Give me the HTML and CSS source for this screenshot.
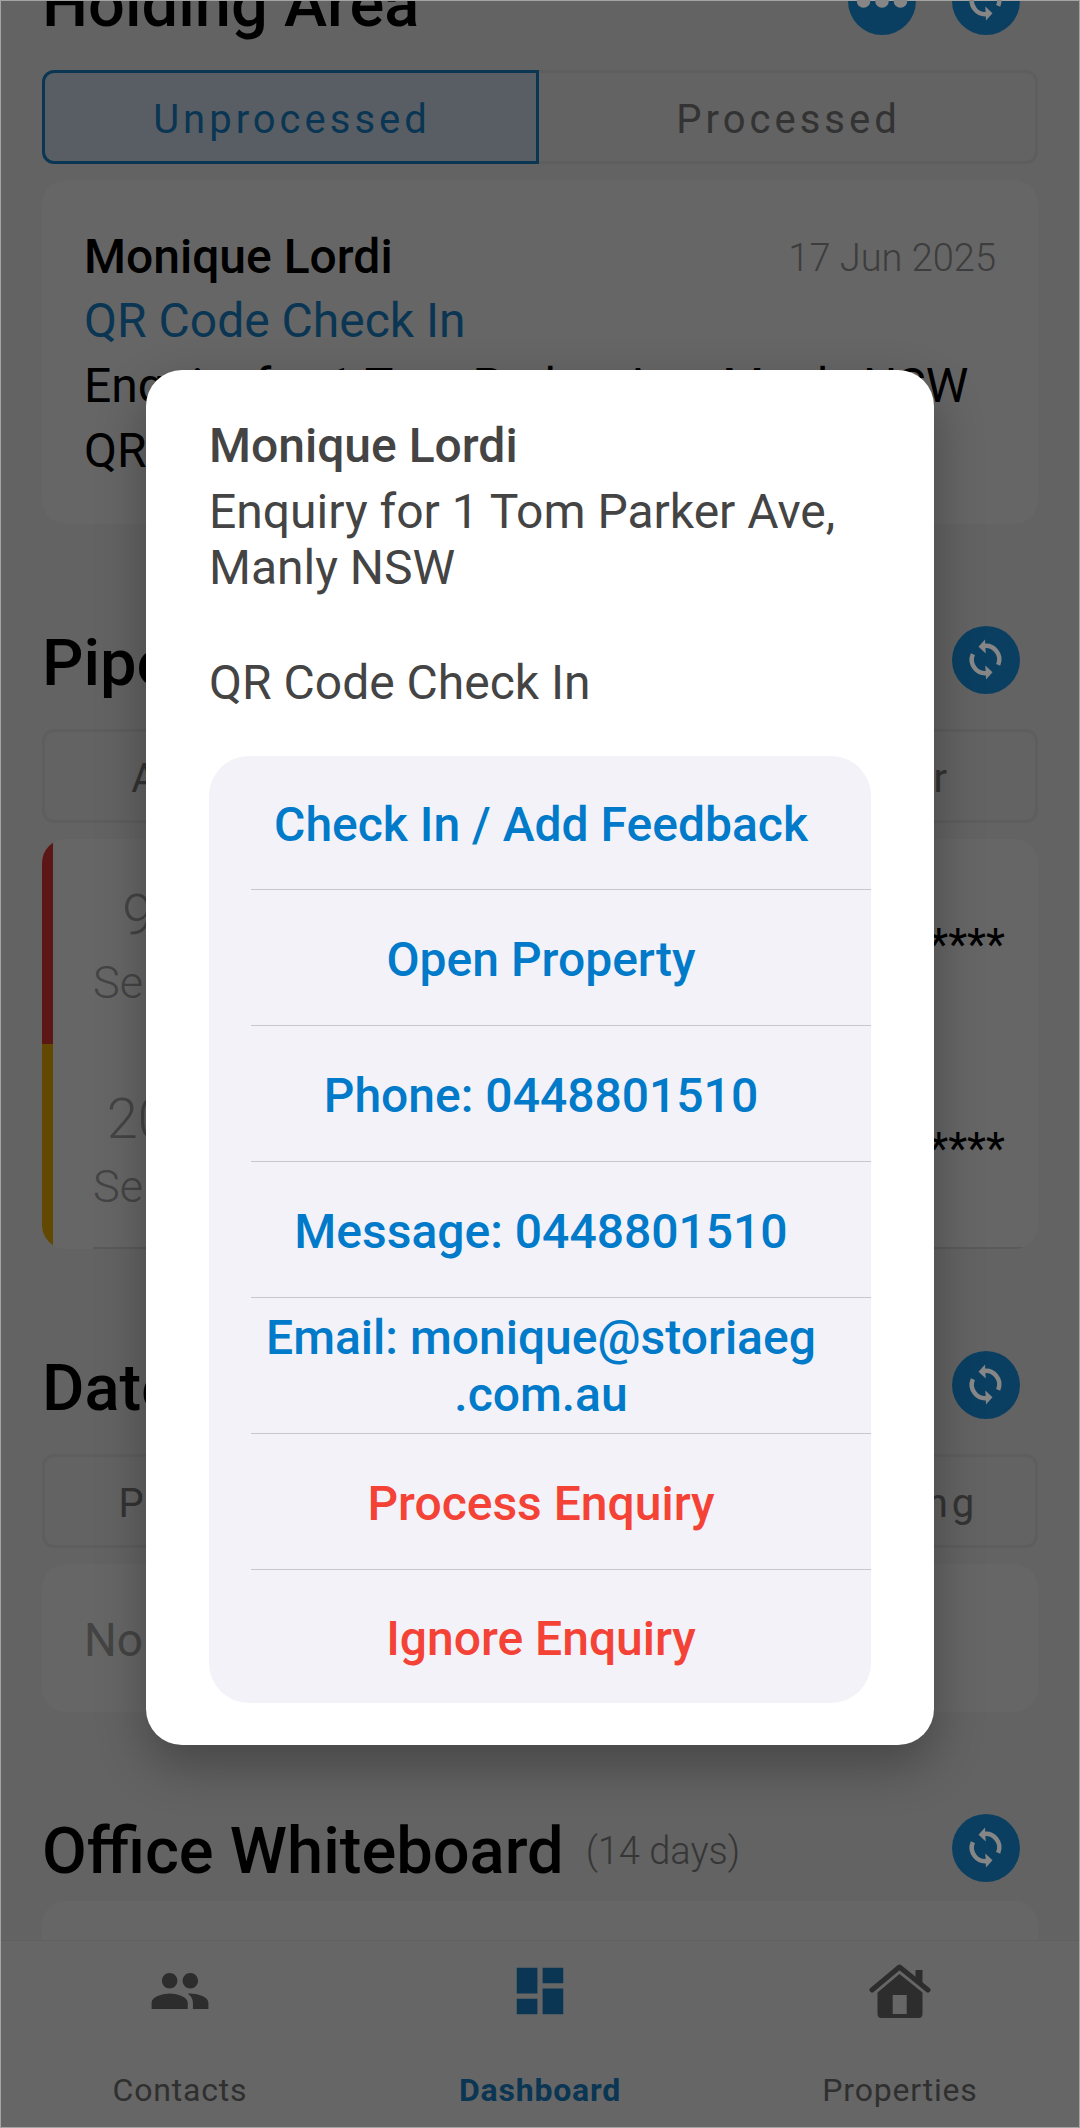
FILE: index.html
```html
<!DOCTYPE html>
<html lang="en">
<head>
<meta charset="utf-8">
<title>Dashboard</title>
<link rel="stylesheet" href="styles.css">
</head>
<body>
<svg class="sprite" aria-hidden="true">
  <symbol id="sync" viewBox="0 0 70 70">
    <path class="sync-arc" d="M47.5 40A14 14 0 0 0 32 20.7"/>
    <path class="sync-head" d="M27.3 21.3 34 14l.7 14.3z"/>
    <path class="sync-arc" d="M21.5 29A14 14 0 0 0 37 48.3"/>
    <path class="sync-head" d="M41.7 47.7 35 55l-.7-14.3z"/>
  </symbol>
</svg>
<div class="app">
  <main class="scroll">
    <div class="content">
      <section class="section">
        <header class="section-head">
          <h2 class="title">Holding Area</h2>
          <div class="head-actions">
            <button class="circle"><svg viewBox="0 0 70 70" class="circle-icon"><circle cx="16" cy="35" r="7"/><circle cx="35" cy="35" r="7"/><circle cx="54" cy="35" r="7"/></svg></button>
            <button class="circle"><svg class="circle-icon"><use href="#sync"/></svg></button>
          </div>
        </header>
        <div class="tabs">
          <div class="tab active">Unprocessed</div>
          <div class="tab">Processed</div>
        </div>
        <article class="card enquiry">
          <div class="enquiry-top"><span class="enquiry-name">Monique Lordi</span><span class="enquiry-date">17 Jun 2025</span></div>
          <div class="enquiry-source">QR Code Check In</div>
          <div class="enquiry-line">Enquiry for 1 Tom Parker Ave, Manly NSW</div>
          <div class="enquiry-line">QR Code Check In</div>
        </article>
      </section>

      <section class="section">
        <header class="section-head">
          <h2 class="title">Pipeline</h2>
          <div class="head-actions">
            <button class="circle"><svg class="circle-icon"><use href="#sync"/></svg></button>
          </div>
        </header>
        <div class="tabs">
          <div class="tab">Archive</div>
          <div class="tab">Current</div>
          <div class="tab">Partner</div>
        </div>
        <article class="card pipeline">
          <div class="pipe-row red">
            <div class="pipe-body">
              <div class="pipe-date"><span class="pipe-day">9</span><span class="pipe-month">Sept</span></div>
              <div class="pipe-mask">*****</div>
            </div>
          </div>
          <div class="pipe-row amber">
            <div class="pipe-body">
              <div class="pipe-date"><span class="pipe-day">20</span><span class="pipe-month">Sept</span></div>
              <div class="pipe-mask">*****</div>
            </div>
          </div>
        </article>
      </section>

      <section class="section">
        <header class="section-head">
          <h2 class="title">Dates</h2>
          <div class="head-actions">
            <button class="circle"><svg class="circle-icon"><use href="#sync"/></svg></button>
          </div>
        </header>
        <div class="tabs">
          <div class="tab">Previous</div>
          <div class="tab">Today</div>
          <div class="tab">Upcoming</div>
        </div>
        <article class="card empty">No dates</article>
      </section>

      <section class="section">
        <header class="section-head flush">
          <h2 class="title">Office Whiteboard <span class="title-note">(14 days)</span></h2>
          <div class="head-actions">
            <button class="circle"><svg class="circle-icon"><use href="#sync"/></svg></button>
          </div>
        </header>
        <article class="card board"></article>
      </section>
    </div>
  </main>
  <nav class="nav">
    <a class="nav-item"><svg viewBox="0 0 24 24" class="nav-icon"><path d="M16 11c1.66 0 2.99-1.34 2.99-3S17.66 5 16 5c-1.66 0-3 1.34-3 3s1.34 3 3 3zm-8 0c1.66 0 2.99-1.34 2.99-3S9.66 5 8 5C6.34 5 5 6.34 5 8s1.34 3 3 3zm0 2c-2.33 0-7 1.17-7 3.5V19h14v-2.5c0-2.33-4.67-3.5-7-3.5zm8 0c-.29 0-.62.02-.97.05 1.16.84 1.97 1.97 1.97 3.45V19h6v-2.5c0-2.33-4.67-3.5-7-3.5z"/></svg><span>Contacts</span></a>
    <a class="nav-item current"><svg viewBox="0 0 24 24" class="nav-icon"><path d="M3 13h8V3H3v10zm0 8h8v-6H3v6zm10 0h8V11h-8v10zm0-18v6h8V3h-8z"/></svg><span>Dashboard</span></a>
    <a class="nav-item"><svg viewBox="0 0 62 62" class="nav-icon"><path class="home-roof" d="M3 30 30.5 7 59 30"/><path d="M46.5 10h7v16l-7-6z"/><path fill-rule="evenodd" d="M30.5 14 8.5 32.5V54a4 4 0 0 0 4 4h37a4 4 0 0 0 4-4V32.5zM23.7 35h14v19h-14z"/></svg><span>Properties</span></a>
  </nav>
</div>

<div class="overlay">
  <div class="modal">
    <div class="modal-name">Monique Lordi</div>
    <div class="modal-text">Enquiry for 1 Tom Parker Ave, Manly NSW</div>
    <div class="modal-text modal-source">QR Code Check In</div>
    <div class="actions">
      <button class="action">Check In / Add Feedback</button>
      <button class="action">Open Property</button>
      <button class="action">Phone: 0448801510</button>
      <button class="action">Message: 0448801510</button>
      <button class="action wrap">Email: monique@storiaeg<wbr>.com.au</button>
      <button class="action danger">Process Enquiry</button>
      <button class="action danger">Ignore Enquiry</button>
    </div>
  </div>
</div>
</body>
</html>
```

FILE: styles.css
```css
* { box-sizing: border-box; }
html, body { margin: 0; padding: 0; height: 2128px; overflow: hidden; }
body { font-family: Roboto, "Noto Sans", sans-serif; background: #f7f7f7; color: #000; position: relative; }
.sprite { display: none; }

.app { display: flex; flex-direction: column; height: 2128px; }
.scroll { flex: 1; overflow: hidden; min-height: 0; }
.content { margin-top: -33px; padding: 0 42px; display: flex; flex-direction: column; }

.section { display: flex; flex-direction: column; margin-bottom: 102px; }
.section-head { display: flex; justify-content: space-between; align-items: center; height: 68px; margin-bottom: 35px; }
.section-head.flush { margin-bottom: 19px; }
.title { margin: 5px 0 0; display: flex; align-items: center; gap: 22px; font-size: 65px; font-weight: 500; line-height: 68px; white-space: nowrap; }
.title-note { font-size: 38px; font-weight: 300; color: #888; }
.head-actions { display: flex; gap: 36px; margin-right: 18px; }
.circle { width: 68px; height: 68px; border-radius: 50%; border: 0; padding: 0; background: #1a9ff5; display: flex; align-items: center; justify-content: center; }
.circle-icon { position: relative; z-index: 2; width: 68px; height: 68px; fill: #868686; }
.sync-arc { fill: none; stroke: #868686; stroke-width: 4.6; }
.sync-head { fill: #868686; }

.tabs { display: flex; height: 94px; border: 3px solid #ebebeb; border-radius: 12px; margin-bottom: 16px; }
.tab { flex: 1; display: flex; align-items: center; justify-content: center; padding: 4px 0 0 3px; font-size: 40px; letter-spacing: 4px; color: #808080; }
.tab.active { flex: 0 0 497px; color: #1a88d0; margin: -3px 0 -3px -3px; border: 3px solid #1a88d0; border-radius: 12px 0 0 12px; background: #dcebfa; }

.card { background: #fff; border-radius: 24px; }
.enquiry { height: 344px; padding: 45px 42px 0; font-size: 48px; line-height: 65px; }
.enquiry-top { height: 65px; display: flex; justify-content: space-between; align-items: center; }
.enquiry-name { font-weight: 500; margin-top: -3px; }
.enquiry-date { font-size: 38px; line-height: 44px; font-weight: 300; color: #999; }
.enquiry-source { color: #1a88d0; margin-top: -2px; }
.enquiry-line { white-space: nowrap; }

.pipeline { height: 410px; overflow: hidden; display: flex; flex-direction: column; }
.pipe-row { flex: 1; display: flex; border-left: 11px solid; }
.pipe-row.red { border-left-color: #e53935; }
.pipe-row.amber { border-left-color: #f5b400; }
.pipe-body { flex: 1; margin-left: 40px; padding: 12px 33px 0 0; display: flex; align-items: center; justify-content: space-between; }
.amber .pipe-body { border-bottom: 2px solid #e0e0e0; }
.pipe-date { display: flex; flex-direction: column; align-items: center; font-weight: 300; color: #aaa; }
.pipe-day { font-size: 56px; line-height: 70px; }
.pipe-month { font-size: 45px; line-height: 66px; }
.pipe-mask { margin-top: -5px; font-size: 44px; }

.empty { height: 148px; padding: 3px 42px 0; display: flex; align-items: center; font-size: 46px; color: #aaa; }
.board { height: 300px; }

.nav { height: 188px; background: #fff; border-top: 1px solid #f0f0f0; display: flex; position: relative; }
.nav-item { flex: 1; display: flex; flex-direction: column; align-items: center; color: #777; font-size: 32px; line-height: 37px; letter-spacing: .8px; padding-top: 19px; }
.nav-icon { width: 62px; height: 62px; fill: #707070; margin-bottom: 50px; }
.home-roof { fill: none; stroke: #707070; stroke-width: 5; stroke-linecap: round; stroke-linejoin: round; }
.nav-item.current { color: #1a88d0; font-weight: 700; }
.nav-item.current .nav-icon { fill: #1a88d0; }

.overlay { position: absolute; inset: 0; z-index: 1; background: rgba(0,0,0,.6); box-shadow: inset 0 0 0 1px #a4a4a4; display: flex; align-items: flex-start; justify-content: center; padding-top: 370px; }
.modal { position: relative; z-index: 3; width: 788px; height: 1375px; background: #fff; border-radius: 36px; padding: 48px 63px 42px; box-shadow: 0 20px 50px rgba(0,0,0,.3); color: #444; font-size: 48px; line-height: 57px; display: flex; flex-direction: column; }
.modal-name { font-weight: 500; line-height: 56px; margin-bottom: 10px; }
.modal-text { line-height: 56px; }
.modal-source { margin-top: 59px; }
.actions { margin-top: 45px; background: #f2f2f8; border-radius: 40px; display: flex; flex-direction: column; }
.action { flex: none; height: 136px; border: 0; background: none; margin: 0 0 0 42px; padding: 3px 40px 0 0; border-bottom: 1px solid #c8c8cc; font-family: inherit; font-size: 48px; font-weight: 500; line-height: 57px; color: #007ac9; text-align: center; }
.action:first-child { height: 134px; }
.action:last-child { height: 133px; border-bottom: 0; }
.action.wrap { padding-top: 0; }
.action.danger { color: #f44336; }
```
